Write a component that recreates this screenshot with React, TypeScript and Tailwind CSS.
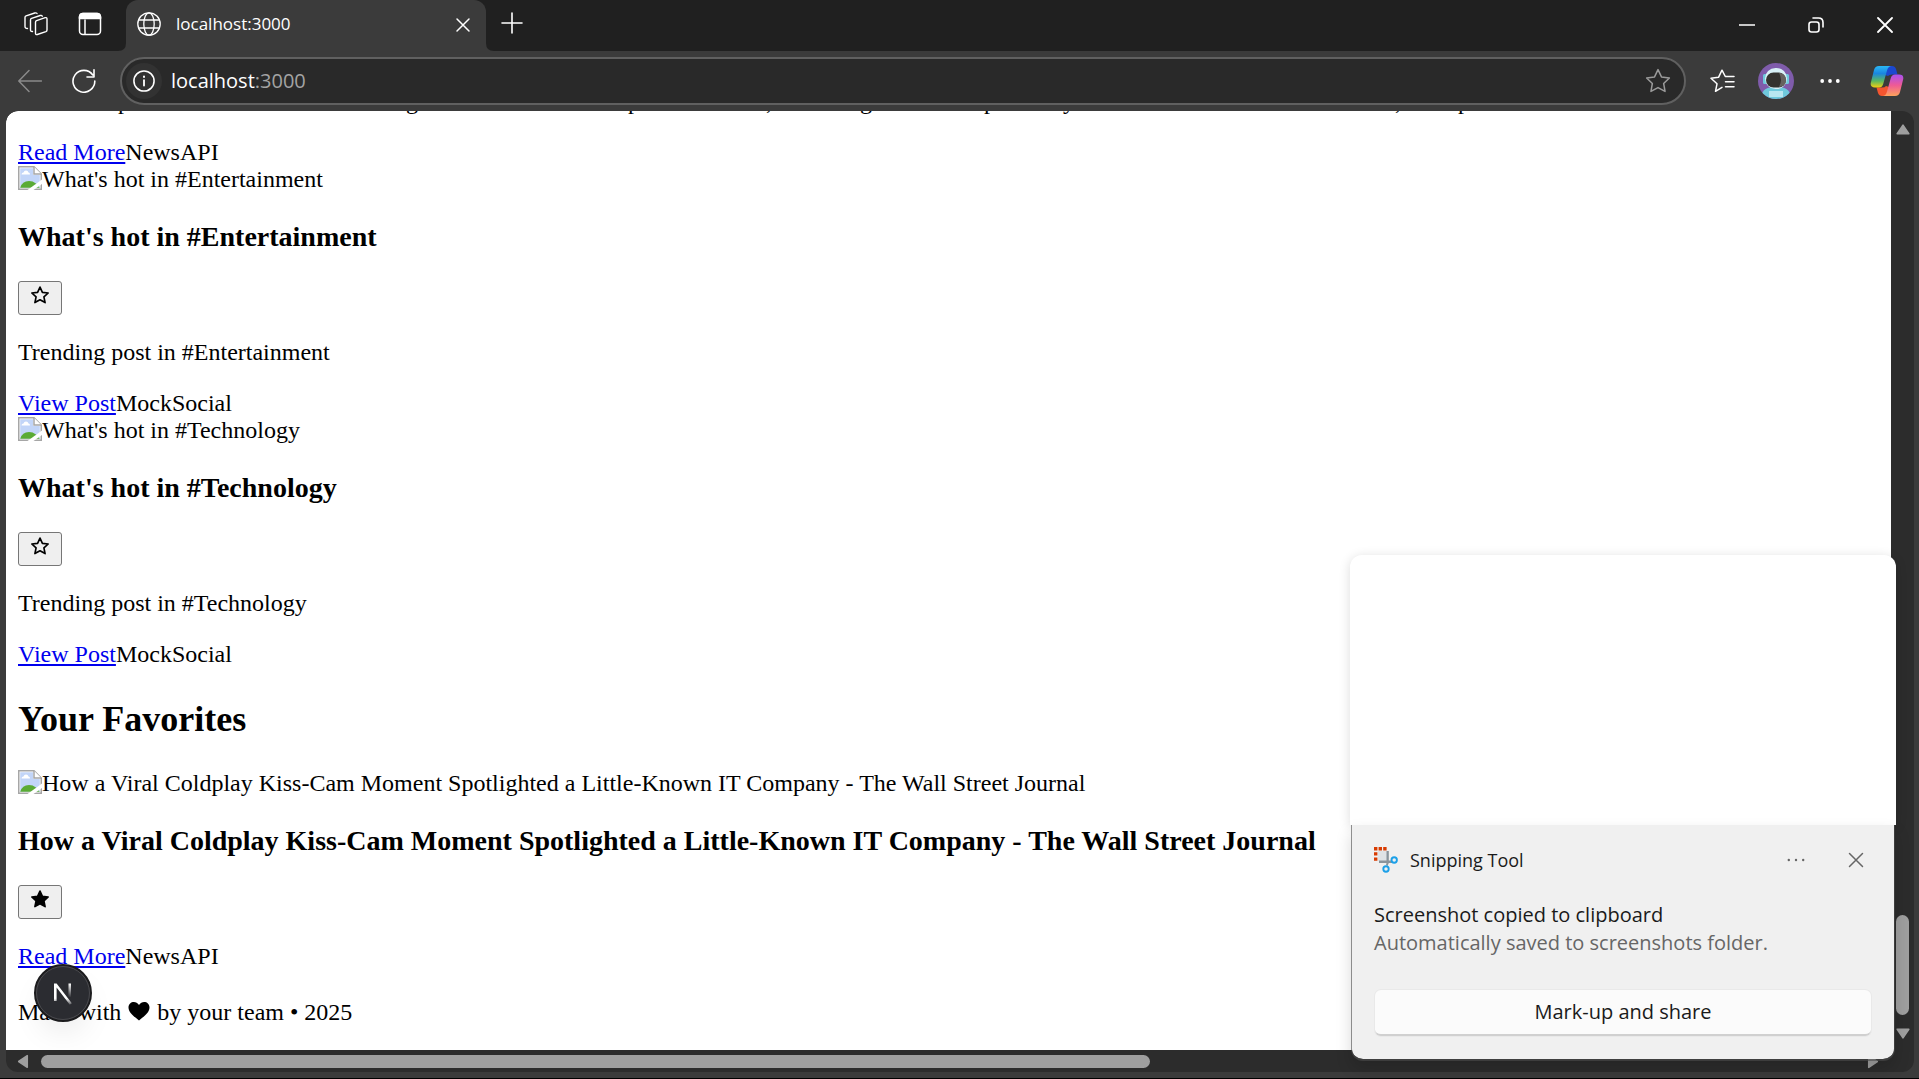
import React from "react";

const line = { fill: "none", stroke: "currentColor", strokeLinecap: "round", strokeLinejoin: "round" } as const;

const starPath =
  "M12 2.500l2.900 6.300 6.900.8-5.100 4.700 1.400 6.800L12 17.700l-6.100 3.400 1.400-6.800-5.100-4.700 6.900-.8z";

function Icon({ size = 24, sw = 1.5, children }: { size?: number; sw?: number; children: React.ReactNode }) {
  return (
    <svg width={size} height={size} viewBox="0 0 24 24" {...line} strokeWidth={sw} aria-hidden="true" className="shrink-0">
      {children}
    </svg>
  );
}

function BrokenImage() {
  return (
    <svg width="24" height="24" viewBox="0 0 24 24" aria-hidden="true" className="shrink-0">
      <path d="M.75.75H16L23.250 8v15.250H.75z" fill="#fff" stroke="#a6a6a6" strokeWidth="1.500" />
      <path d="M2.200 2.200H15V9h6.800v12.800H2.200z" fill="#c2d5f8" />
      <path d="M3.500 8.500q0-2 2-2 .5-2 2.500-2t2.500 2q1.500 0 1.500 2z" fill="#fff" />
      <path d="M2.200 21.800q2-6.800 8.800-6.800 4 0 6.500 2.200l4.300 4.600z" fill="#5aab35" />
      <path d="M16 .75V8h7.250" fill="#fff" stroke="#a6a6a6" strokeWidth="1.500" />
      <path d="M24 13.500v4.500L15.500 24H9.500z" fill="#fff" />
    </svg>
  );
}

function TabFlare({ className }: { className: string }) {
  return (
    <svg width="8" height="8" viewBox="0 0 8 8" className={className} aria-hidden="true">
      <path d="M8 0v8H0q8 0 8-8z" fill="#3b3b3b" />
    </svg>
  );
}

function TitleBar() {
  return (
    <header className="flex h-[51px] shrink-0 items-stretch bg-[#202020] text-white">
      <div className="flex w-[126px] shrink-0 items-center gap-[30px] pb-1 pl-6">
        <button aria-label="Workspaces">
          <svg width="24" height="26" viewBox="0 0 24 26" {...line} strokeWidth="1.400">
            <path d="M11.500 11.200q0-1.200 1.100-1.600l8.600-2.900q1.800-.5 1.800 1.300v11q0 1.200-1.100 1.600l-8.600 2.900q-1.800.5-1.800-1.300z" />
            <path d="M8.500 20.500q-2 .2-2-1.500V9q0-1.200 1.100-1.600l8.600-2.900q1.600-.4 2.100.7" />
            <path d="M3.500 17.500q-2.500 0-2.500-2V6.500q0-1.200 1.100-1.600l8.600-2.900q1.600-.4 2.300.4" />
          </svg>
        </button>
        <button aria-label="Tab actions">
          <svg width="24" height="24" viewBox="0 0 24 24" {...line} strokeWidth="1.500">
            <rect x="1.500" y="1.500" width="21" height="21" rx="3.500" />
            <path d="M1.500 6.500V5q0-3.500 3.500-3.500h14q3.500 0 3.500 3.500v1.500z" fill="currentColor" />
            <path d="M7 8v14" />
          </svg>
        </button>
      </div>
      <div className="relative flex w-[360px] shrink-0 items-center rounded-t-xl bg-[#3b3b3b] pb-[3px] pl-[11px] pr-[14px]">
        <TabFlare className="absolute -left-2 bottom-0" />
        <TabFlare className="absolute -right-2 bottom-0 -scale-x-100" />
        <Icon sw={1.300}>
          <circle cx="12" cy="12" r="11.200" />
          <ellipse cx="12" cy="12" rx="5.200" ry="11.200" />
          <path d="M2 8h20M2 16h20" />
        </Icon>
        <span className="ml-[15px] flex-1 text-[17px]">localhost:3000</span>
        <button aria-label="Close tab" className="pt-[1px]">
          <Icon size={18} sw={2}>
            <path d="M4 4l16 16M20 4L4 20" />
          </Icon>
        </button>
      </div>
      <button aria-label="New tab" className="ml-[14px] pb-[5px]">
        <Icon sw={1.600}>
          <path d="M12 2v20M2 12h20" />
        </Icon>
      </button>
      <div className="ml-auto flex items-center gap-[53px] pb-[1px] pr-[26px]">
        <button aria-label="Minimize">
          <svg width="16" height="16" viewBox="0 0 16 16" {...line} strokeWidth="1.700">
            <path d="M.5 8h15" />
          </svg>
        </button>
        <button aria-label="Restore">
          <svg width="16" height="16" viewBox="0 0 16 16" {...line} strokeWidth="1.600">
            <rect x="1" y="5" width="10" height="10" rx="2.500" />
            <path d="M5 1h5.500q4.500 0 4.500 4.500V10" />
          </svg>
        </button>
        <button aria-label="Close">
          <svg width="16" height="16" viewBox="0 0 16 16" {...line} strokeWidth="1.800">
            <path d="M1 1l14 14M15 1L1 15" />
          </svg>
        </button>
      </div>
    </header>
  );
}

function Avatar() {
  return (
    <svg width="36" height="36" viewBox="0 0 36 36" aria-hidden="true">
      <defs>
        <clipPath id="avatar-clip">
          <circle cx="18" cy="18" r="18" />
        </clipPath>
      </defs>
      <g clipPath="url(#avatar-clip)">
        <rect width="36" height="36" fill="#7f5cab" />
        <path d="M3 36q0-11 11-12h8q11 1 11 12z" fill="#6fc9dc" />
        <rect x="5" y="11" width="4" height="10" rx="1.500" fill="#6fc9dc" />
        <rect x="27" y="11" width="4" height="10" rx="1.500" fill="#6fc9dc" />
        <rect x="7" y="5" width="22" height="21" rx="10.500" fill="#d8f0f6" />
        <rect x="8" y="9.500" width="20" height="15" rx="7.500" fill="#34322f" />
        <path d="M21 9.800q7 1 7 7.200t-7 7q4-7 0-14.200z" fill="#66625f" />
        <path d="M11 28h14v6H11z" fill="#b9e6f0" />
      </g>
    </svg>
  );
}

function Copilot() {
  return (
    <svg width="34" height="32" viewBox="0 0 34 32" aria-hidden="true">
      <defs>
        <linearGradient id="cp-a" x1="0" y1="0" x2="0" y2="1">
          <stop offset="0" stopColor="#2bb8f5" />
          <stop offset=".35" stopColor="#1a86e0" />
          <stop offset=".7" stopColor="#5cb85f" />
          <stop offset="1" stopColor="#f5cf10" />
        </linearGradient>
        <linearGradient id="cp-b" x1="0" y1="0" x2="0" y2="1">
          <stop offset="0" stopColor="#a850f0" />
          <stop offset=".5" stopColor="#ef5a95" />
          <stop offset="1" stopColor="#fda35c" />
        </linearGradient>
      </defs>
      <path d="M17 1h5q3 0 4 3l1.500 5.500H22q-3 0-4 1.500l-3-1z" fill="#1b48d0" />
      <path d="M17 31h-5q-3 0-4-3l-1.500-5.500H12q3 0 4-1.500l3 1z" fill="#f4552f" />
      <path d="M9 1h12q-3 .5-4 4.500L13.200 19q-1 3.500-4.200 3.500H5q-5.500 0-4-5.500L4 5q1-4 5-4z" fill="url(#cp-a)" />
      <path d="M25 31H13q3-.5 4-4.500L20.800 13q1-3.500 4.200-3.500h4q5.500 0 4 5.500l-3 12q-1 4-5 4z" fill="url(#cp-b)" />
    </svg>
  );
}

function Toolbar() {
  return (
    <nav className="flex h-[60px] shrink-0 items-center bg-[#3b3b3b] pl-[18px] pr-[15px] text-white">
      <button aria-label="Back" className="text-[#8a8a8a]">
        <Icon sw={1.500}>
          <path d="M23.500 12H1M11 1.500L.8 12 11 22.500" />
        </Icon>
      </button>
      <button aria-label="Refresh" className="ml-[30px]">
        <Icon sw={1.600}>
          <path d="M22.800 12A10.900 10.900 0 1 1 20.800 6M22 .8v7.200h-7" />
        </Icon>
      </button>
      <div className="ml-6 flex h-12 flex-1 items-center rounded-full border-2 border-[#606060] bg-[#292929] pl-1 pr-[13px]">
        <button aria-label="Site information" className="flex size-9 items-center justify-center rounded-full bg-[#323232]">
          <Icon size={22} sw={1.700}>
            <circle cx="12" cy="12" r="11" />
            <path d="M12 11v6" strokeWidth="2" />
            <path d="M12 7.200v.3" strokeWidth="2.200" />
          </Icon>
        </button>
        <label className="relative ml-[9px] flex-1 text-[20px]">
          <span aria-hidden="true">
            localhost<span className="text-[#a3a3a3]">:3000</span>
          </span>
          <input
            type="text"
            aria-label="Address"
            defaultValue="localhost:3000"
            className="absolute inset-0 w-full bg-transparent text-transparent outline-none"
          />
        </label>
        <button aria-label="Add to favorites" className="text-[#9a9a9a]">
          <Icon size={26} sw={1.400}>
            <path d="M12 1.500l3.200 6.700 7.300 1-5.300 5.100 1.300 7.300L12 18.100l-6.500 3.500 1.300-7.300L1.500 9.200l7.300-1z" />
          </Icon>
        </button>
      </div>
      <div className="ml-6 flex items-center">
        <button aria-label="Favorites">
          <svg width="25" height="24" viewBox="0 0 25 24" {...line} strokeWidth="1.500">
            <path d="M12 18.300l-6.500 4 1.500-7.500-6-5.500 7.500-1L12 1.200l3.300 6.300H24M15.500 12.700H24M15.500 17.800H24" />
          </svg>
        </button>
        <button aria-label="Profile" className="ml-[23px]">
          <Avatar />
        </button>
        <button aria-label="Settings and more" className="ml-[26px]">
          <svg width="20" height="20" viewBox="0 0 20 20" fill="currentColor">
            <circle cx="2.200" cy="10" r="1.900" />
            <circle cx="10" cy="10" r="1.900" />
            <circle cx="17.800" cy="10" r="1.900" />
          </svg>
        </button>
        <button aria-label="Copilot" className="ml-[30px]">
          <Copilot />
        </button>
      </div>
    </nav>
  );
}

function FavButton({ filled = false }: { filled?: boolean }) {
  return (
    <button
      aria-label={filled ? "Remove favorite" : "Add favorite"}
      className="flex h-[34px] w-11 justify-center rounded-[3px] border border-[#767676] bg-[#efefef] pt-[3px]"
    >
      <svg
        width="20"
        height="20"
        viewBox="0 0 24 24"
        fill={filled ? "currentColor" : "none"}
        stroke="currentColor"
        strokeWidth="2"
        strokeLinejoin="round"
        aria-hidden="true"
      >
        <path d={starPath} />
      </svg>
    </button>
  );
}

function SourceLine({ link, source }: { link: string; source: string }) {
  return (
    <div>
      <a href="#" className="text-[#0000ee] underline">
        {link}
      </a>
      <span>{source}</span>
    </div>
  );
}

function Card({ title, text, link, source, filled }: { title: string; text?: string; link: string; source: string; filled?: boolean }) {
  return (
    <article>
      <div className="flex h-[27px] items-start whitespace-nowrap">
        <BrokenImage />
        <span>{title}</span>
      </div>
      <h3 className="my-7 whitespace-nowrap text-[28px] font-bold leading-[32px]">{title}</h3>
      <FavButton filled={filled} />
      {text && <p className="mt-6">{text}</p>}
      <div className="mt-6">
        <SourceLine link={link} source={source} />
      </div>
    </article>
  );
}

function Page() {
  return (
    <main className="relative flex min-w-0 flex-1 flex-col justify-end overflow-hidden rounded-tl-xl bg-white px-3 pb-6 font-['Liberation_Serif',serif] text-[24px] leading-[27px] text-black">
      <p className="mb-6 flex">
        <span className="ml-[100px] w-[288px]">p</span>
        <span className="w-[222px]">g</span>
        <span className="w-[138px]">p</span>
        <span className="w-[94px]">,</span>
        <span className="w-[124px]">g</span>
        <span className="w-[79px]">p</span>
        <span className="w-[332px]">y</span>
        <span className="w-[63px]">,</span>
        <span>p</span>
      </p>
      <SourceLine link="Read More" source="NewsAPI" />
      <Card title="What's hot in #Entertainment" text="Trending post in #Entertainment" link="View Post" source="MockSocial" />
      <Card title="What's hot in #Technology" text="Trending post in #Technology" link="View Post" source="MockSocial" />
      <h2 className="my-[30px] text-[36px] font-bold leading-[42px]">Your Favorites</h2>
      <Card
        title="How a Viral Coldplay Kiss-Cam Moment Spotlighted a Little-Known IT Company - The Wall Street Journal"
        link="Read More"
        source="NewsAPI"
        filled
      />
      <footer className="mt-[29px] flex items-center whitespace-pre">
        <span>Made with </span>
        <svg width="24" height="22" viewBox="0 0 24 22" fill="currentColor" aria-label="love" className="mb-1">
          <path d="M12 20.500C8 17 1.500 13 1.500 7.500 1.500 1.500 9 0 12 5c3-5 10.500-3.500 10.500 2.500C22.500 13 16 17 12 20.500z" />
        </svg>
        <span> by your team • 2025</span>
      </footer>
      <button
        aria-label="Open Next.js Dev Tools"
        className="absolute bottom-7 left-7 flex size-[58px] items-center justify-center rounded-full border-2 border-[#1b1b1d] bg-[#2b2c31] shadow-[0_16px_32px_-8px_rgba(0,0,0,0.10)] outline outline-1 -outline-offset-3 outline-[#4a4a4e]"
      >
        <svg width="20" height="24" viewBox="0 0 20 24" fill="none" aria-hidden="true">
          <defs>
            <linearGradient id="n-diag" x1="0" y1="0" x2="0" y2="1">
              <stop offset=".7" stopColor="#fff" />
              <stop offset="1" stopColor="#fff" stopOpacity="0.2" />
            </linearGradient>
            <linearGradient id="n-bar" x1="0" y1="0" x2="0" y2="1">
              <stop offset="0" stopColor="#fff" />
              <stop offset="1" stopColor="#fff" stopOpacity="0" />
            </linearGradient>
          </defs>
          <path d="M1 20V2.500h2.600l15.200 19.800-2 1.400L3.600 6.500V20z" fill="url(#n-diag)" />
          <rect x="15.500" y="2.500" width="2.500" height="14" fill="url(#n-bar)" />
        </svg>
      </button>
    </main>
  );
}

function Arrow({ className }: { className: string }) {
  return (
    <svg width="14" height="11" viewBox="0 0 14 11" className={className} aria-hidden="true">
      <path d="M7 1.200L12.800 9.800H1.200z" fill="#9f9f9f" stroke="#9f9f9f" strokeWidth="1.600" strokeLinejoin="round" />
    </svg>
  );
}

function SnipIcon() {
  return (
    <svg width="24" height="26" viewBox="0 0 24 26" aria-hidden="true">
      <path d="M4 4h9v10H4z" fill="#e0e3e6" />
      <path d="M12.500 4h2.300v9.500H18V16h-3.200l-1.300 3-1.500-1 .5-2H5v-2.500h7.500z" fill="#8a949c" />
      <path d="M0 0h3.400v3.400H0zM4.600 0H8v3.400H4.600zM9.200 0h3.400v3.400H9.200zM0 5.200h3.400v3.400H0zM0 10.400h3.400v3.400H0z" fill="#d83b01" />
      <g fill="none" stroke="#1ca0e8" strokeWidth="1.900">
        <circle cx="20.200" cy="13" r="2.700" />
        <circle cx="12" cy="22" r="2.700" />
      </g>
    </svg>
  );
}

function Toast() {
  return (
    <aside className="absolute bottom-[17px] right-[23px] w-[546px] font-['Open_Sans',sans-serif]">
      <div className="h-[270px] rounded-t-xl bg-white shadow-[0_2px_12px_rgba(0,0,0,0.14)]" />
      <div className="relative mx-[1px] rounded-b-xl border-x border-b-2 border-[#4d4d4d]/60 bg-[#f0f0f0] bg-clip-padding px-[22px] pb-[23px] shadow-[0_8px_16px_rgba(0,0,0,0.15)]">
        <div className="flex h-[70px] items-center">
          <SnipIcon />
          <h2 className="ml-3 flex-1 text-[18px] text-[#1a1a1a]">Snipping Tool</h2>
          <button aria-label="More options" className="mr-[43px] text-[#666]">
            <svg width="18" height="18" viewBox="0 0 18 18" fill="currentColor">
              <circle cx="1.800" cy="9" r="1.200" />
              <circle cx="9" cy="9" r="1.200" />
              <circle cx="16.200" cy="9" r="1.200" />
            </svg>
          </button>
          <button aria-label="Dismiss" className="mr-2 text-[#666]">
            <svg width="16" height="16" viewBox="0 0 16 16" {...line} strokeWidth="1.500">
              <path d="M1.500 1.500l13 13M14.500 1.500l-13 13" />
            </svg>
          </button>
        </div>
        <p className="mt-[6px] text-[20px] leading-7 text-[#1a1a1a]">Screenshot copied to clipboard</p>
        <p className="text-[20px] leading-7 text-[#666]">Automatically saved to screenshots folder.</p>
        <div className="mx-[1px] mt-[33px]">
          <button className="h-[46px] w-full rounded-md border-b-2 border-[#d0d0d0] bg-[#fbfbfb] text-[20px] text-[#1a1a1a] shadow-[0_0_0_1px_#e9e9e9]">
            Mark-up and share
          </button>
        </div>
      </div>
    </aside>
  );
}

export default function App() {
  return (
    <div className="relative flex h-screen flex-col overflow-hidden border-b border-black bg-[#3b3b3b] font-['Open_Sans',sans-serif]">
      <TitleBar />
      <Toolbar />
      <div className="mb-[6px] ml-[6px] mr-[5px] flex min-h-0 flex-1 flex-col overflow-hidden rounded-xl bg-[#2c2c2c]">
        <div className="flex min-h-0 flex-1">
          <Page />
          <div className="flex w-[23px] shrink-0 flex-col items-center pt-[13px] pb-[11px]">
            <Arrow className="" />
            <div className="mt-auto mb-[13px] h-[100px] w-[13px] rounded-full bg-[#9f9f9f]" />
            <Arrow className="rotate-180" />
          </div>
        </div>
        <div className="flex h-[22px] shrink-0 items-center pl-[10px] pr-[34px]">
          <Arrow className="-rotate-90" />
          <div className="ml-[11px] h-[13px] w-119/200 rounded-full bg-[#9f9f9f]" />
          <Arrow className="ml-auto rotate-90" />
        </div>
      </div>
      <Toast />
    </div>
  );
}
